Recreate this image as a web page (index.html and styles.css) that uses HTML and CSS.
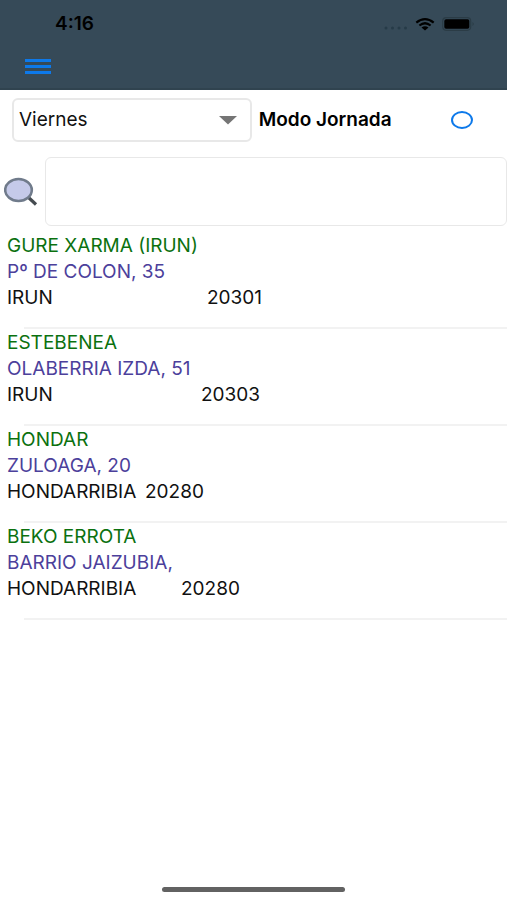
FILE: index.html
```html
<!DOCTYPE html>
<html lang="es">
<head>
<meta charset="utf-8">
<meta name="viewport" content="width=device-width, initial-scale=1">
<title>Clientes</title>
<link rel="stylesheet" href="styles.css">
</head>
<body>
<header class="header">
  <div class="status">
    <time class="clock">4:16</time>
    <div class="indicators">
      <svg class="signal" width="24" height="4" viewBox="0 0 24 4" aria-hidden="true"><circle cx="2" cy="2" r="1.5"/><circle cx="8.500" cy="2" r="1.500"/><circle cx="15" cy="2" r="1.500"/><circle cx="21.500" cy="2" r="1.500"/></svg>
      <svg class="wifi" width="20" height="13" viewBox="0 0 20 13" aria-hidden="true"><path d="M1.300 4.700Q10-2.300 18.700 4.700M4.400 7.500Q10 3 15.600 7.500" fill="none" stroke="#000" stroke-width="2.200"/><path d="M6.500 9.600Q10 7 13.500 9.600L10 12.500Z"/></svg>
      <svg class="battery" width="33" height="14" viewBox="0 0 33 14" aria-hidden="true"><rect x=".7" y=".7" width="28" height="12.600" rx="3.500" fill="none" stroke="#2b3c46" stroke-width="1.200"/><rect x="2.300" y="2.300" width="25" height="9.400" rx="1.800"/><path d="M30.500 5Q33 7 30.500 9Z" fill="#2b3c46"/></svg>
    </div>
  </div>
  <button class="menu" type="button" aria-label="Menú">
    <svg width="26" height="16" viewBox="0 0 26 16" aria-hidden="true"><path d="M0 2.500h26M0 8.500h26M0 14.500h26" stroke="#0d79ea" stroke-width="3"/></svg>
  </button>
</header>
<main class="main">
  <div class="filters">
    <div class="day">
      <select class="day-select" aria-label="Día">
        <option>Viernes</option>
      </select>
      <svg class="day-arrow" width="18" height="9" viewBox="0 0 18 9" aria-hidden="true"><path d="M0 0h18L9 8.500Z" fill="#757575"/></svg>
    </div>
    <label class="mode-label" for="mode">Modo Jornada</label>
    <input class="mode" id="mode" type="checkbox">
  </div>
  <div class="search">
    <label class="search-label" for="search" aria-label="Buscar">
      <svg width="34" height="30" viewBox="0 0 34 30" aria-hidden="true"><path d="M24 20L32 27.500" stroke="#454b50" stroke-width="3.200"/><ellipse cx="14.500" cy="13" rx="13.300" ry="11" fill="#c5cae9" stroke="#707b8b" stroke-width="2.600"/></svg>
    </label>
    <input class="search-input" id="search" type="text">
  </div>
  <ul class="clients">
    <li class="client">
      <div class="name">GURE XARMA (IRUN)</div>
      <div class="address">Pº DE COLON, 35</div>
      <div class="place"><span class="town town-xl">IRUN</span><span>20301</span></div>
    </li>
    <li class="client">
      <div class="name">ESTEBENEA</div>
      <div class="address">OLABERRIA IZDA, 51</div>
      <div class="place"><span class="town town-l">IRUN</span><span>20303</span></div>
    </li>
    <li class="client">
      <div class="name">HONDAR</div>
      <div class="address">ZULOAGA, 20</div>
      <div class="place"><span class="town town-s">HONDARRIBIA</span><span>20280</span></div>
    </li>
    <li class="client">
      <div class="name">BEKO ERROTA</div>
      <div class="address">BARRIO JAIZUBIA,</div>
      <div class="place"><span class="town town-m">HONDARRIBIA</span><span>20280</span></div>
    </li>
  </ul>
</main>
<div class="home"></div>
</body>
</html>
```
FILE: styles.css
```css
* { box-sizing: border-box; }

body {
  margin: 0;
  min-height: 100vh;
  display: flex;
  flex-direction: column;
  background: #fff;
  color: #111;
  font-family: Inter, "Liberation Sans", sans-serif;
  font-size: 19px;
  line-height: 26px;
}

.header {
  height: 90px;
  background: #364a58;
  border-bottom: 2px solid #30434f;
}

.status {
  display: flex;
  align-items: center;
  justify-content: space-between;
  height: 48px;
  padding: 0 32px 0 55px;
  color: #000;
}

.clock { font-weight: 600; }

.indicators {
  display: flex;
  align-items: center;
  gap: 7px;
}

.signal {
  margin-top: 8px;
  fill: #263b48;
}

.menu {
  display: block;
  margin: 10px 0 0 25px;
  padding: 0;
  border: 0;
  background: none;
  line-height: 0;
}

.main { flex: 1; }

.filters {
  display: flex;
  align-items: center;
  padding: 8px 34px 0 12px;
}

.day {
  position: relative;
  flex: 0 0 52%;
}

.day-select {
  display: block;
  width: 100%;
  height: 44px;
  padding: 0 40px 0 5px;
  border: 2px solid #e8e8e8;
  border-radius: 6px;
  appearance: none;
  background: #fff;
  color: #111;
  font: inherit;
}

.day-arrow {
  position: absolute;
  top: 18px;
  right: 15px;
  pointer-events: none;
}

.mode-label {
  margin-left: 7px;
  color: #000;
  font-weight: 600;
}

.mode {
  appearance: none;
  width: 22px;
  height: 18px;
  margin: 0 0 0 auto;
  border: 2px solid #0d79ea;
  border-radius: 50%;
}

.mode:checked { background: #0d79ea; }

.search {
  display: flex;
  align-items: center;
  margin-top: 15px;
}

.search-label {
  flex: 0 0 45px;
  padding-left: 4px;
  line-height: 0;
}

.search-input {
  flex: 1;
  min-width: 0;
  height: 69px;
  padding: 0 12px;
  border: 1px solid #e8e8e8;
  border-radius: 6px;
  font: inherit;
}

.clients {
  margin: 0;
  padding: 0;
  list-style: none;
}

.client {
  padding: 7px 7px 0;
}

.client::after {
  content: "";
  display: block;
  height: 2px;
  margin: 16px -7px 0 17px;
  background: #f2f2f2;
}

.client + .client { padding-top: 1px; }

.name { color: #0b710f; }

.address { color: #4c409b; }

.place { display: flex; }

.town-s { width: 138px; }
.town-m { width: 174px; }
.town-l { width: 194px; }
.town-xl { width: 200px; }

.home {
  width: 36%;
  height: 5px;
  margin: 0 auto 8px;
  border-radius: 3px;
  background: #626262;
}
```
